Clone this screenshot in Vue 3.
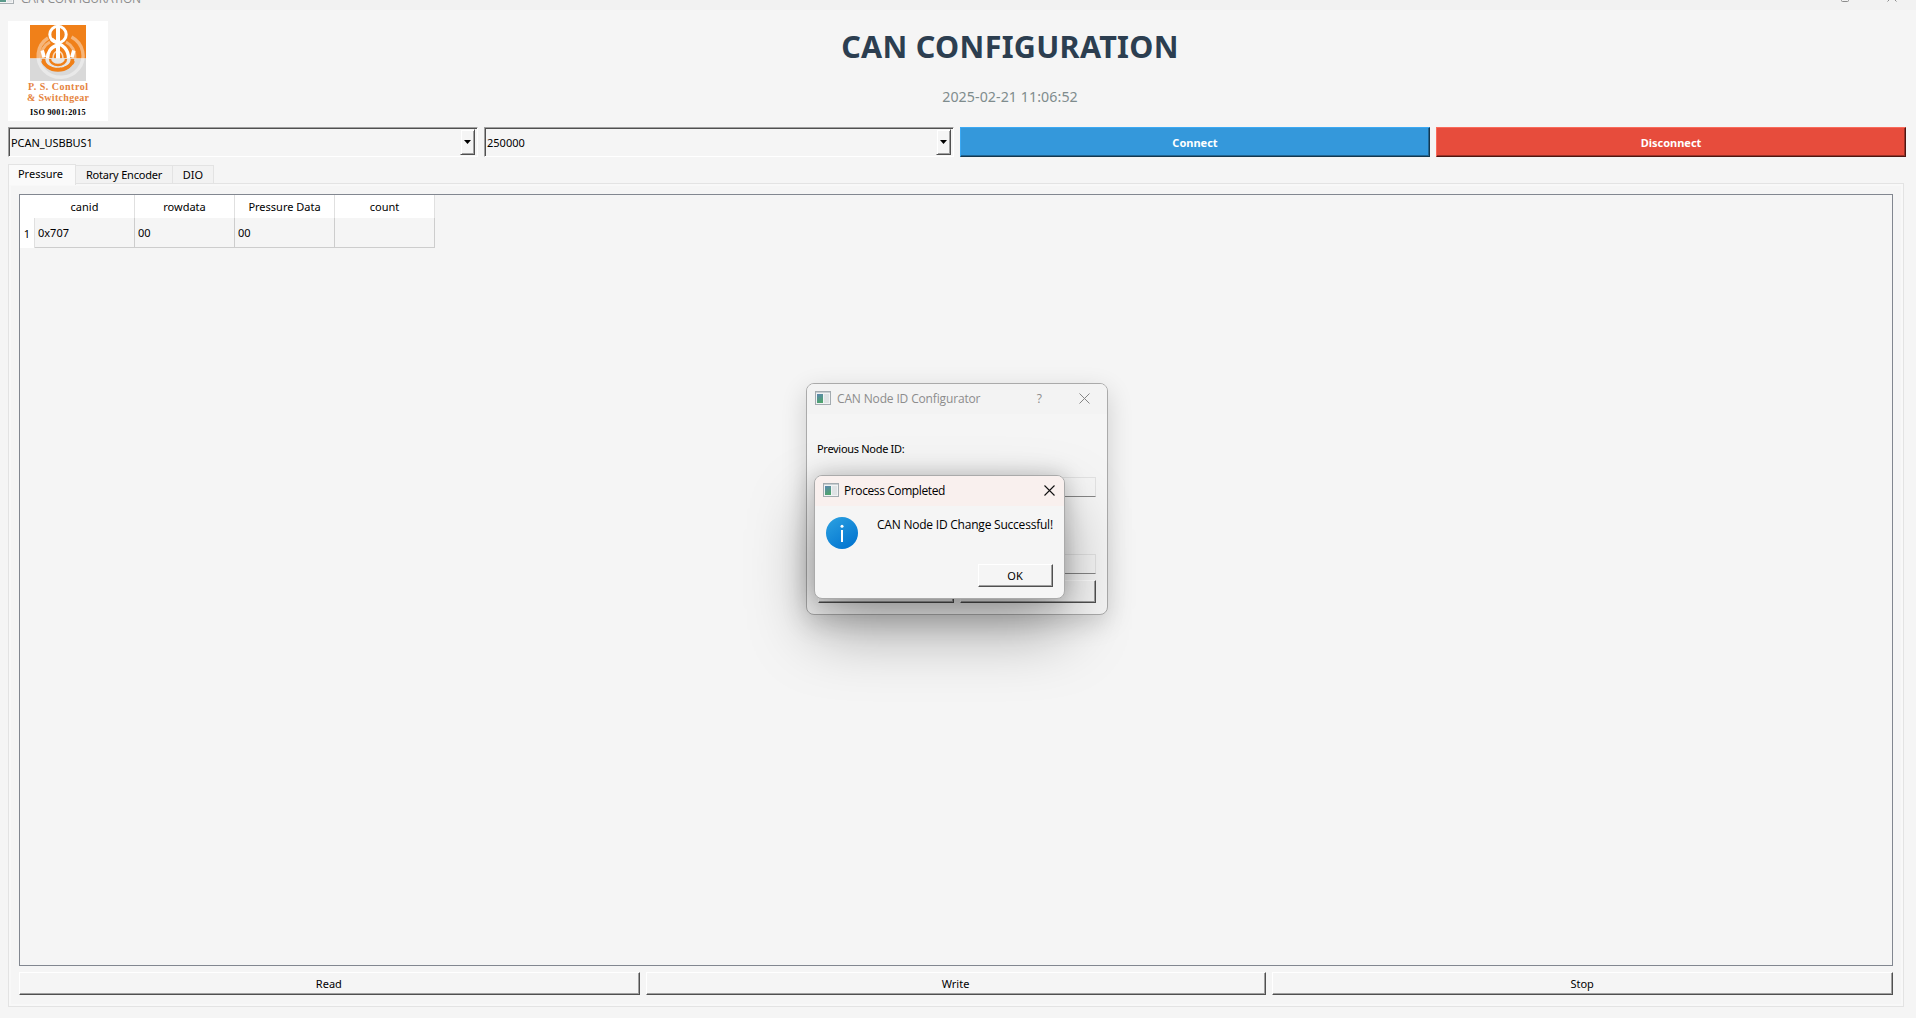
<script setup>
const ports = [
  { text: 'PCAN_USBBUS1', cls: 'port' },
  { text: '250000', cls: 'rate' },
]
const tabs = [
  { text: 'Pressure', cls: 'active' },
  { text: 'Rotary Encoder', cls: 'rotary' },
  { text: 'DIO', cls: 'dio' },
]
const columns = ['canid', 'rowdata', 'Pressure Data', 'count']
const row = ['0x707', '00', '00', '']
const actions = ['Read', 'Write', 'Stop']
</script>

<template>
  <div class="window">
    <header class="titlebar">
      <svg class="app-icon" width="16" height="14" viewBox="0 0 16 14">
        <rect x=".5" y=".5" width="15" height="13" fill="#f4f4f4" stroke="#a9afb3" />
        <rect x="2" y="3" width="6" height="9" fill="#5b9a8b" />
        <rect x="9" y="3" width="5" height="9" fill="#e4e6e8" />
      </svg>
      <span class="caption">CAN CONFIGURATION</span>
      <svg class="controls" width="58" height="12" viewBox="0 0 58 12">
        <rect x="1.500" y="3.500" width="7" height="7" rx="1" fill="none" stroke="#8c8c8c" />
        <path d="M47.500 1.500l9 9M56.500 1.500l-9 9" stroke="#8c8c8c" />
      </svg>
    </header>

    <section class="banner">
      <svg class="logo" width="100" height="100" viewBox="0 0 100 100">
        <rect width="100" height="100" fill="#fff" />
        <rect x="22" y="4" width="56" height="33.500" fill="#f08019" />
        <rect x="22" y="37.500" width="56" height="22.500" fill="#d9d9d9" />
        <g fill="none" stroke="#fff">
          <path d="M63.500 16A22.500 21.500 0 1 1 40 17" stroke-width="3.400" opacity=".42" />
          <path d="M42 21A16.500 17 0 0 0 33 37.500" stroke-width="3" opacity=".42" />
          <path d="M58 21A16.500 17 0 0 1 67 37.500" stroke-width="3" opacity=".42" />
        </g>
        <path d="M37.500 37.500A12.500 11 0 0 0 62.500 37.500" fill="#e6e6e6" />
        <path d="M35.500 38A14.500 11 0 0 0 64.500 38" fill="none" stroke="#f08019" stroke-width="3.600" />
        <path d="M34.500 40A16 11 0 0 0 65.500 40" fill="none" stroke="#f08019" stroke-width="3" stroke-dasharray="5 3.400" />
        <path d="M42 38A8 6 0 0 0 58 38" fill="none" stroke="#f08019" stroke-width="2.400" />
        <g fill="none" stroke="#fff">
          <circle cx="50" cy="13.500" r="8.200" stroke-width="3" />
          <path d="M50 6V37.500" stroke-width="4" />
          <path d="M43.500 18C48 23 60.500 23 60.500 37.500" stroke-width="3.400" />
          <path d="M39.500 37.500C39.500 31 43 26 49 24.500" stroke-width="3.400" />
          <path d="M45 37.500Q45 31 50 30Q55 31 55 37.500" stroke-width="1.600" opacity=".7" />
          <path d="M34.200 29.500L36.200 36.500M65.800 29.500L63.800 36.500" stroke-width="3.600" />
        </g>
        <g font-family="'Liberation Serif', serif" font-weight="700">
          <text x="20" y="69.300" font-size="10" textLength="60" fill="#e58440">P. S. Control</text>
          <text x="19" y="79.900" font-size="10" textLength="62" fill="#e58440">&amp; Switchgear</text>
          <text x="22" y="94.300" font-size="8.200" textLength="55.500" fill="#000">ISO 9001:2015</text>
        </g>
      </svg>
      <div class="headings">
        <h1><span>CAN CONFIGURATION</span></h1>
        <p><span>2025-02-21 11:06:52</span></p>
      </div>
    </section>

    <section class="toolbar">
      <div v-for="p in ports" :key="p.text" class="combo">
        <span class="value" :class="p.cls">{{ p.text }}</span>
        <span class="drop">
          <svg width="7" height="4" viewBox="0 0 7 4"><path d="M0 0H7L3.500 4Z" /></svg>
        </span>
      </div>
      <button class="solid connect"><span>Connect</span></button>
      <button class="solid disconnect"><span>Disconnect</span></button>
    </section>

    <nav class="tabs">
      <div v-for="t in tabs" :key="t.text" class="tab" :class="t.cls"><span>{{ t.text }}</span></div>
    </nav>

    <main class="pane">
      <div class="table">
        <div class="tr head">
          <div class="rowhead"></div>
          <div v-for="c in columns" :key="c" class="th"><span>{{ c }}</span></div>
        </div>
        <div class="tr">
          <div class="rowhead">1</div>
          <div v-for="(c, i) in row" :key="i" class="td"><span>{{ c }}</span></div>
        </div>
      </div>
      <div class="actions">
        <button v-for="a in actions" :key="a" class="raised"><span>{{ a }}</span></button>
      </div>
    </main>

    <div class="dialog config">
      <div class="dlg-title">
        <svg class="dlg-icon" width="16" height="14" viewBox="0 0 16 14">
          <defs>
            <linearGradient id="pane-fill" x1="0" y1="0" x2="0.300" y2="1">
              <stop offset="0" stop-color="#5b86b0" />
              <stop offset="1" stop-color="#4fa36f" />
            </linearGradient>
          </defs>
          <rect x=".5" y=".5" width="15" height="13" fill="#f1f3f4" stroke="#a3abb0" />
          <path d="M1 1.500H15" stroke="#c8ced2" />
          <rect x="2" y="3" width="6" height="9" fill="url(#pane-fill)" />
          <rect x="9" y="3" width="5" height="9" fill="#dfe3e5" />
        </svg>
        <span class="dlg-name">CAN Node ID Configurator</span>
        <span class="help">?</span>
        <svg class="close" width="11" height="11" viewBox="0 0 11 11"><path d="M.5 .5l10 10M10.500 .5l-10 10" stroke="#858585" /></svg>
      </div>
      <div class="config-body">
        <label><span>Previous Node ID:</span></label>
        <div class="field first"></div>
        <div class="field second"></div>
        <div class="pair">
          <div class="raised"></div>
          <div class="raised"></div>
        </div>
      </div>
    </div>

    <div class="dialog message">
      <div class="dlg-title">
        <svg class="dlg-icon" width="16" height="14" viewBox="0 0 16 14">
          <rect x=".5" y=".5" width="15" height="13" fill="#f1f3f4" stroke="#a3abb0" />
          <path d="M1 1.500H15" stroke="#c8ced2" />
          <rect x="2" y="3" width="6" height="9" fill="url(#pane-fill)" />
          <rect x="9" y="3" width="5" height="9" fill="#dfe3e5" />
        </svg>
        <span class="dlg-name">Process Completed</span>
        <svg class="close" width="11" height="11" viewBox="0 0 11 11"><path d="M.5 .5l10 10M10.500 .5l-10 10" stroke="#111" stroke-width="1.100" /></svg>
      </div>
      <div class="message-body">
        <svg class="info" width="32" height="32" viewBox="0 0 32 32">
          <defs>
            <linearGradient id="info-fill" x1="0.150" y1="0" x2="0.850" y2="1">
              <stop offset="0" stop-color="#2a9fe0" />
              <stop offset="1" stop-color="#0072cf" />
            </linearGradient>
          </defs>
          <circle cx="16" cy="16" r="16" fill="url(#info-fill)" />
          <rect x="15" y="13" width="2" height="12" fill="#fff" />
          <circle cx="16" cy="9.300" r="1.500" fill="#fff" />
        </svg>
        <span class="note">CAN Node ID Change Successful!</span>
      </div>
      <div class="message-foot">
        <button class="raised ok"><span>OK</span></button>
      </div>
    </div>
  </div>
</template>

<style>
html,
body {
  background: #f5f5f5;
  overflow: hidden;
}
</style>

<style scoped>
* {
  box-sizing: border-box;
}
.window {
  position: relative;
  width: 1916px;
  height: 1018px;
  overflow: hidden;
  display: flex;
  flex-direction: column;
  background: #f5f5f5;
  color: #000;
  font: 11px/14px 'Noto Sans', 'DejaVu Sans', sans-serif;
  white-space: nowrap;
}
svg {
  display: block;
  flex: none;
}
button {
  margin: 0;
  padding: 0;
  font: inherit;
  color: inherit;
}
.titlebar {
  flex: none;
  height: 10px;
  display: flex;
  align-items: flex-start;
  background: #f2f2f2;
}
.app-icon {
  margin: -10px 0 0 -2px;
}
.caption {
  margin: -9px 0 0 7px;
  font: 12px/16px 'Open Sans', 'Noto Sans', sans-serif;
  letter-spacing: -0.22px;
  color: #8c8c8c;
}
.controls {
  margin: -9px 18px 0 auto;
}
.banner {
  flex: none;
  height: 117px;
  padding: 11px 10px 0 8px;
  display: flex;
}
.headings {
  flex: 1;
  display: flex;
  flex-direction: column;
  align-items: center;
}
h1 {
  margin: 6px 0 0 6px;
  font-size: 30.500px;
  line-height: 38px;
  font-weight: 700;
  letter-spacing: 0.300px;
  color: #2c3e50;
}
p {
  margin: 22px 0 0 6px;
  font-size: 14.200px;
  line-height: 20px;
  letter-spacing: 0.080px;
  color: #7f8c8d;
}
.toolbar {
  flex: none;
  height: 30px;
  padding: 0 10px 0 8px;
  display: grid;
  grid-template-columns: repeat(4, 1fr);
  gap: 6px;
}
.combo {
  display: flex;
  align-items: center;
  justify-content: space-between;
  border: 1px solid;
  border-color: #a0a0a0 #fff #fff #a0a0a0;
  box-shadow: inset 1px 1px 0 #505050;
  padding: 1px 2px 1px 2px;
}
.value {
  padding-top: 2px;
}
.port {
  letter-spacing: -0.080px;
}
.drop {
  align-self: stretch;
  width: 15px;
  display: flex;
  align-items: center;
  justify-content: center;
  border: 1px solid;
  border-color: #f5f5f5 #505050 #505050 #f5f5f5;
  box-shadow: inset 1px 1px 0 #fff, inset -1px -1px 0 #a0a0a0;
}
.solid {
  border: 1px solid;
  padding-top: 2px;
  color: #fff;
  font-weight: 700;
}
.connect {
  background: #3498db;
  border-color: #3ba9f4 #14384f #14384f #3ba9f4;
  box-shadow: inset -1px -1px 0 #226592;
}
.disconnect {
  background: #e74c3c;
  border-color: #fa6a5a #4e1611 #4e1611 #fa6a5a;
  box-shadow: inset -1px -1px 0 #9a3228;
}
.tabs {
  flex: none;
  height: 27px;
  padding: 6px 0 0 8px;
  display: flex;
  align-items: flex-end;
}
.tab {
  height: 18px;
  display: flex;
  align-items: center;
  justify-content: center;
  background: #f2f2f2;
  border: 1px solid #e3e3e3;
  border-left: 0;
  border-bottom: 0;
  margin-bottom: 1px;
  padding-top: 1px;
}
.tab.active {
  position: relative;
  z-index: 1;
  height: 21px;
  width: 68px;
  margin-bottom: -1px;
  padding: 0 3px 2px 0;
  background: #fafafa;
  border-left: 1px solid #e3e3e3;
}
.rotary {
  width: 97px;
  letter-spacing: -0.200px;
}
.dio {
  width: 41px;
}
.pane {
  flex: none;
  width: 1896px;
  height: 824px;
  margin: -1px 0 0 8px;
  border: 1px solid #e3e3e3;
  box-shadow: inset 0 0 0 2px #f8f8f8;
  padding: 10px 10px 0;
  display: flex;
  flex-direction: column;
  gap: 6px;
}
.table {
  height: 772px;
  border: 1px solid #828790;
}
.tr {
  display: flex;
  height: 30px;
}
.tr.head {
  height: 23px;
}
.rowhead {
  width: 15px;
  background: #fff;
  border-right: 1px solid #e0e0e0;
  line-height: 31px;
  text-align: center;
}
.head .rowhead {
  border-color: #fff;
}
.th {
  width: 100px;
  display: flex;
  align-items: center;
  justify-content: center;
  background: #fff;
  border-right: 1px solid #e0e0e0;
}
.td {
  width: 100px;
  padding-left: 3px;
  line-height: 30px;
  border-right: 1px solid #cdcdcd;
  border-bottom: 1px solid #cdcdcd;
}
.actions {
  display: flex;
  gap: 6px;
}
.actions .raised {
  flex: 1;
}
.raised {
  height: 23px;
  display: flex;
  align-items: center;
  justify-content: center;
  padding: 0 1px 0 0;
  background: #f5f5f5;
  border: 1px solid;
  border-color: #fff #505050 #505050 #fff;
  box-shadow: inset -1px -1px 0 #a0a0a0;
}
.dialog {
  position: absolute;
  overflow: visible;
  border: 1px solid #aaa;
  border-radius: 8px;
  background: #f5f5f5;
}
.config {
  left: 806px;
  top: 383px;
  width: 302px;
  height: 232px;
  box-shadow: 0 8px 26px rgba(0, 0, 0, 0.16);
}
.message {
  left: 814px;
  top: 475px;
  width: 251px;
  height: 124px;
  box-shadow: 0 0 21px rgba(0, 0, 0, 0.22), 0 32px 64px rgba(0, 0, 0, 0.34);
}
.dlg-title {
  height: 30px;
  padding: 0 10px 0 8px;
  display: flex;
  align-items: center;
  border-radius: 7px 7px 0 0;
  font: 12px/16px 'Open Sans', 'Noto Sans', sans-serif;
}
.config .dlg-title {
  padding-right: 17px;
  background: #f3f3f3;
  color: #8c8c8c;
}
.message .dlg-title {
  padding-right: 9px;
  background: #f9f0ee;
}
.dlg-icon {
  margin-bottom: 2px;
}
.dlg-name {
  margin-left: 6px;
  letter-spacing: -0.150px;
}
.message .dlg-name {
  margin-left: 5px;
  letter-spacing: -0.400px;
}
.help {
  margin-left: auto;
  margin-right: 37px;
}
.close {
  margin-bottom: 2px;
}
.message .close {
  margin-left: auto;
}
.config-body {
  padding: 28px 11px 0 11px;
  display: flex;
  flex-direction: column;
}
label {
  margin-left: -1px;
  letter-spacing: -0.300px;
}
.field {
  height: 20px;
  border: 1px solid;
  border-color: #e2e2e2 #e2e2e2 #868686 #e2e2e2;
}
.field.first {
  margin-top: 21px;
}
.field.second {
  margin-top: 57px;
}
.pair {
  margin: 6px 0 0 0;
  display: flex;
  gap: 6px;
}
.pair .raised {
  flex: 1;
}
.message-body {
  padding: 11px 0 0 11px;
  display: flex;
}
.note {
  margin-left: 19px;
  font: 12px/16px 'Open Sans', 'Noto Sans', sans-serif;
  letter-spacing: -0.220px;
}
.message-foot {
  display: flex;
  justify-content: flex-end;
  padding: 15px 11px 0 0;
}
.ok {
  width: 75px;
}
</style>
